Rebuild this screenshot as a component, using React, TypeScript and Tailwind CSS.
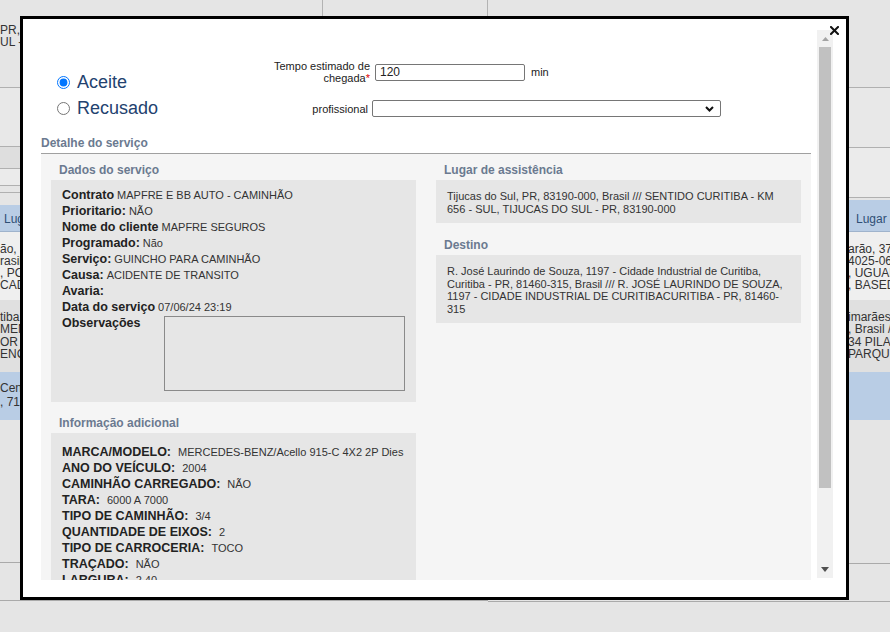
import React from "react";

const FONT = "font-['Liberation_Sans',Arial,sans-serif]";

function BackgroundPage() {
  const cell = "whitespace-nowrap overflow-hidden text-[12px] text-[#333]";
  // the left column's text only shows in the 20px strip left of the modal
  const strip = "w-[21px] overflow-hidden";
  return (
    <div className="flex h-full w-full">
      {/* left half of the listing behind the modal */}
      <div className="flex w-[488px] shrink-0 flex-col">
        <div className="flex h-[88px] border-b border-[#b0b0b0]">
          <div className={`w-[323px] border-r border-[#b3b3b3] pt-[24px] leading-[12px] ${cell}`}>
            <div className={strip}>PR, a</div>
            <div className={strip}>UL - P</div>
          </div>
          <div className="w-[165px] border-r border-[#b3b3b3]" />
        </div>
        <div className="h-[59px] border-b border-[#b0b0b0] bg-[#e8e8e8]" />
        <div className="h-[22px] border-b border-[#b0b0b0] bg-[#dedede]" />
        <div className="h-[17px] border-b border-[#b0b0b0] bg-[#ebebeb]" />
        <div className="h-[7px] border-b border-[#b0b0b0]" />
        <div className="h-[12px]" />
        <div className={`h-[27px] border-b border-[#9fb3cc] bg-[#b9cde5] pl-[4px] leading-[29px] !text-[#2f4f75] ${cell}`}>
          <div className="w-[17px] overflow-hidden">Lugar</div>
        </div>
        <div className={`h-[68px] bg-[#efefef] pt-[11px] leading-[12px] ${cell}`}>
          <div className={strip}>ão, 3</div>
          <div className={strip}>rasil</div>
          <div className={strip}>, PO</div>
          <div className={strip}>CADO</div>
        </div>
        <div className={`h-[72px] bg-[#e0e0e0] pt-[11px] leading-[12.4px] ${cell}`}>
          <div className={strip}>tiba</div>
          <div className={strip}>MENT</div>
          <div className={strip}>OR N</div>
          <div className={strip}>ENC</div>
        </div>
        <div className={`h-[48px] bg-[#b9cde5] pt-[9px] leading-[14px] ${cell}`}>
          <div className={strip}>Centr</div>
          <div className={strip}>, 710</div>
        </div>
        <div className="h-[143px] border-b border-[#aaaaaa]" />
        <div className="h-[38px] border-b border-[#aaaaaa]" />
      </div>

      {/* right half of the listing */}
      <div className="flex flex-1 flex-col">
        <div className="h-[88px] border-b border-[#b0b0b0]" />
        <div className="h-[60px] border-b border-[#b0b0b0] bg-[#e8e8e8]" />
        <div className="h-[50px] border-b border-[#b0b0b0] bg-[#ebebeb]" />
        <div className="h-[2px]" />
        <div className={`h-[32px] border-b border-[#9fb3cc] bg-[#b9cde5] pl-[368px] leading-[39px] !text-[#2f4f75] ${cell}`}>
          Lugar d
        </div>
        <div className={`h-[68px] bg-[#efefef] pl-[360px] pt-[11px] leading-[12px] ${cell}`}>
          <div>arão, 37</div>
          <div>4025-060</div>
          <div>, UGUAR</div>
          <div>, BASED</div>
        </div>
        <div className={`h-[72px] bg-[#e0e0e0] pl-[360px] pt-[11px] leading-[12.4px] ${cell}`}>
          <div>imarães</div>
          <div>, Brasil //</div>
          <div>34 PILAR</div>
          <div>PARQUE</div>
        </div>
        <div className="h-[48px] bg-[#b9cde5]" />
        <div className="h-[144px] border-b border-[#aaaaaa]" />
        <div className="h-[38px] border-b border-[#aaaaaa]" />
      </div>
    </div>
  );
}

function SectionTitle({ children }: { children: React.ReactNode }) {
  return (
    <div className="pl-[8px] text-[12px] font-bold leading-[14px] text-[#6b7a90]">{children}</div>
  );
}

function Field({ label, value }: { label: string; value?: string }) {
  return (
    <div className="flex h-[16px] items-baseline whitespace-nowrap text-[12.5px] leading-[16px]">
      <span className="font-bold text-[#222]">{label}</span>
      {value ? <span className="ml-[3px] text-[11px] text-[#333]">{value}</span> : null}
    </div>
  );
}

function InfoField({ label, value }: { label: string; value: string }) {
  return (
    <div className="flex h-[16px] items-baseline whitespace-nowrap text-[12.5px] leading-[16px]">
      <span className="font-bold text-[#222]">{label}</span>
      <span className="ml-[7px] text-[11px] text-[#333]">{value}</span>
    </div>
  );
}

function Scrollbar() {
  return (
    <div className="flex h-[548px] w-[16px] shrink-0 flex-col bg-[#f1f1f1]">
      <div className="flex h-[17px] items-center justify-center">
        <svg width="7" height="4" viewBox="0 0 7 4">
          <path d="M0 4 L3.5 0 L7 4 Z" fill="#a3a3a3" />
        </svg>
      </div>
      <div className="mx-[2px] h-[441px] bg-[#c1c1c1]" />
      <div className="flex-1" />
      <div className="flex h-[17px] items-center justify-center">
        <svg width="8" height="5" viewBox="0 0 8 5">
          <path d="M0 0 L8 0 L4 5 Z" fill="#505050" />
        </svg>
      </div>
    </div>
  );
}

function Modal() {
  return (
    <div className="absolute left-[20px] top-[16px] h-[584px] w-[829px] border-[3px] border-black bg-white">
      <button type="button" aria-label="Fechar" className="absolute right-[7px] top-[7px] flex h-[9px] w-[9px] items-center justify-center">
        <svg width="9" height="9" viewBox="0 0 9 9">
          <path d="M1 1 L8 8 M8 1 L1 8" stroke="#111" strokeWidth="2" strokeLinecap="square" />
        </svg>
      </button>

      <div className="flex pl-[18px] pr-[13px] pt-[11px]">
        <div className="h-[550px] w-[770px] shrink-0 overflow-hidden">
          {/* acceptance form */}
          <div className="flex h-[106px]">
            <div className="w-[200px] shrink-0 pl-[16px] pt-[39px] text-[18px] leading-[26px] text-[#23426f]">
              <label className="flex items-center gap-[7px]">
                <input type="radio" name="resp" defaultChecked className="m-0 h-[13px] w-[13px]" />
                Aceite
              </label>
              <label className="flex items-center gap-[7px]">
                <input type="radio" name="resp" className="m-0 h-[13px] w-[13px]" />
                Recusado
              </label>
            </div>
            <div className="pt-[30px] text-[11px] text-[#222]">
              <div className="flex items-center">
                <div className="w-[130px] pr-[1px] text-right leading-[12px]">
                  Tempo estimado de
                  <br />
                  chegada<span className="text-[#d00]">*</span>
                </div>
                <input
                  defaultValue="120"
                  className="ml-[4px] h-[17px] w-[150px] rounded-[2px] border border-[#767676] px-[4px] text-[12px] outline-none"
                />
                <span className="ml-[6px]">min</span>
              </div>
              <div className="mt-[16px] flex items-center">
                <div className="w-[130px] pr-[3px] text-right leading-[12px]">profissional</div>
                <div className="relative ml-[1px] h-[17px] w-[349px] rounded-[2px] border border-[#767676] bg-white">
                  <svg className="absolute right-[6px] top-[5px]" width="9" height="6" viewBox="0 0 9 6">
                    <path d="M1 1 L4.5 4.5 L8 1" stroke="#111" strokeWidth="2" fill="none" />
                  </svg>
                </div>
              </div>
            </div>
          </div>

          <div className="border-b border-[#a0a0a0] pb-[3px] text-[12px] font-bold leading-[14px] text-[#6b7a90]">
            Detalhe do serviço
          </div>

          <div className="flex h-[426px] gap-[20px] bg-[#f5f5f5] px-[10px] pt-[9px]">
            <div className="w-[365px] shrink-0">
              <SectionTitle>Dados do serviço</SectionTitle>
              <div className="mt-[3px] bg-[#e6e6e6] px-[11px] pb-[11px] pt-[7px]">
                <Field label="Contrato" value="MAPFRE E BB AUTO - CAMINHÃO" />
                <Field label="Prioritario:" value="NÃO" />
                <Field label="Nome do cliente" value="MAPFRE SEGUROS" />
                <Field label="Programado:" value="Não" />
                <Field label="Serviço:" value="GUINCHO PARA CAMINHÃO" />
                <Field label="Causa:" value="ACIDENTE DE TRANSITO" />
                <Field label="Avaria:" />
                <Field label="Data do serviço" value="07/06/24 23:19" />
                <div className="flex items-start">
                  <div className="w-[102px] shrink-0 text-[12.5px] font-bold leading-[16px] text-[#222]">Observações</div>
                  <textarea className="mt-[1px] h-[75px] w-[241px] resize-none border border-[#8a8a8a] bg-transparent" />
                </div>
              </div>

              <div className="mt-[14px]">
                <SectionTitle>Informação adicional</SectionTitle>
              </div>
              <div className="mt-[3px] bg-[#e6e6e6] px-[11px] pb-[11px] pt-[11px]">
                <InfoField label="MARCA/MODELO:" value="MERCEDES-BENZ/Acello 915-C 4X2 2P Dies" />
                <InfoField label="ANO DO VEÍCULO:" value="2004" />
                <InfoField label="CAMINHÃO CARREGADO:" value="NÃO" />
                <InfoField label="TARA:" value="6000 A 7000" />
                <InfoField label="TIPO DE CAMINHÃO:" value="3/4" />
                <InfoField label="QUANTIDADE DE EIXOS:" value="2" />
                <InfoField label="TIPO DE CARROCERIA:" value="TOCO" />
                <InfoField label="TRAÇADO:" value="NÃO" />
                <InfoField label="LARGURA:" value="2,40" />
                <InfoField label="COMPRIMENTO:" value="7,00" />
              </div>
            </div>

            <div className="w-[365px] shrink-0">
              <SectionTitle>Lugar de assistência</SectionTitle>
              <div className="mt-[3px] whitespace-nowrap bg-[#e6e6e6] px-[11px] pb-[7px] pt-[10px] text-[11px] leading-[13px] text-[#333]">
                Tijucas do Sul, PR, 83190-000, Brasil /// SENTIDO CURITIBA - KM
                <br />
                656 - SUL, TIJUCAS DO SUL - PR, 83190-000
              </div>

              <div className="mt-[15px]">
                <SectionTitle>Destino</SectionTitle>
              </div>
              <div className="mt-[3px] whitespace-nowrap bg-[#e6e6e6] px-[11px] pb-[8px] pt-[10px] text-[11px] leading-[12.5px] text-[#333]">
                R. José Laurindo de Souza, 1197 - Cidade Industrial de Curitiba,
                <br />
                Curitiba - PR, 81460-315, Brasil /// R. JOSÉ LAURINDO DE SOUZA,
                <br />
                1197 - CIDADE INDUSTRIAL DE CURITIBACURITIBA - PR, 81460-
                <br />
                315
              </div>
            </div>
          </div>
        </div>
        <div className="w-[6px] shrink-0" />
        <Scrollbar />
      </div>
    </div>
  );
}

export default function App() {
  return (
    <div className={`relative h-[632px] w-[890px] overflow-hidden bg-[#e5e5e5] ${FONT}`}>
      <BackgroundPage />
      <Modal />
    </div>
  );
}
